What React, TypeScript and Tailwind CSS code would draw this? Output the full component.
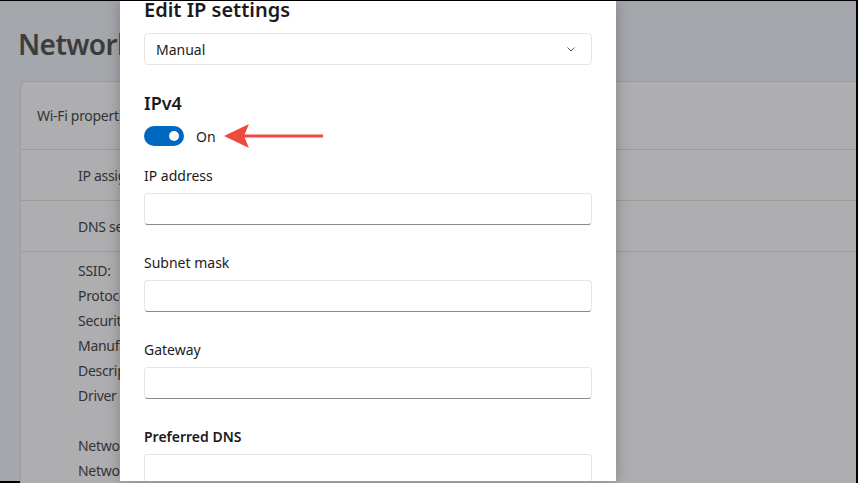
import React from 'react';

const font = { fontFamily: '"Segoe UI", "Noto Sans", "Open Sans", sans-serif' };

function TextBox() {
  return (
    <div className="shrink-0 h-[32px] w-[448px] rounded-[4px] border border-[#e5e5e5] border-b-[#8a8a8a] bg-white" />
  );
}

function Field({ label, bold }: { label: string; bold?: boolean }) {
  return (
    <div className="shrink-0 flex flex-col">
      <div className={`shrink-0 h-[20px] leading-[20px] text-[14px] text-[#1b1b1b] ${bold ? 'font-semibold' : ''}`}>
        {label}
      </div>
      <div className="shrink-0 mt-[7px]">
        <TextBox />
      </div>
    </div>
  );
}

export default function App() {
  const specs = ['SSID:', 'Protocol:', 'Security type:', 'Manufacturer:', 'Description:', 'Driver version:', '', 'Network band:', 'Network channel:'];

  return (
    <div
      className="relative w-[858px] h-[483px] overflow-hidden bg-black pt-[1px] pr-[2px] pb-[2px]"
      style={font}
    >
      {/* Background settings page (dimmed, hidden behind the dialog) */}
      <div className="flex flex-col w-full h-full bg-[#a4a7ab] text-[#333333] tracking-[-0.3px]">
        <div className="shrink-0 h-[80px] pl-[18px] pt-[24px]">
          <div className="w-[102px] overflow-hidden whitespace-nowrap text-[28px] leading-[38px] font-semibold text-[#3c3c3c] tracking-[-0.6px]">
            Network &amp; internet
          </div>
        </div>
        <div className="ml-[20px] flex-1 bg-[#aeaeb0] border-t border-l border-[#9c9c9c] rounded-tl-[6px] text-[14px]">
          <div className="h-[68px] flex items-center pl-[16px] border-b border-[#9c9c9c]">
            <span className="w-[83px] overflow-hidden whitespace-nowrap">Wi-Fi properties</span>
          </div>
          <div className="h-[51px] flex items-center pl-[57px] border-b border-[#9c9c9c]">
            <span className="w-[42px] overflow-hidden whitespace-nowrap">IP assignment:</span>
          </div>
          <div className="h-[51px] flex items-center pl-[57px] border-b border-[#9c9c9c]">
            <span className="w-[42px] overflow-hidden whitespace-nowrap">DNS server assignment:</span>
          </div>
          <div className="pl-[57px] pt-[6px] flex flex-col">
            {specs.map((s, i) => (
              <div key={i} className="shrink-0 w-[42px] overflow-hidden whitespace-nowrap h-[25px] leading-[25px]">{s}</div>
            ))}
          </div>
        </div>
      </div>

      {/* Dialog */}
      <div className="absolute left-[120px] top-[1px] bottom-[2px] w-[496px] bg-white shadow-[0_0_14px_rgba(0,0,0,0.25)] flex overflow-hidden">
        <div className="flex-1 pl-[24px] pr-[24px] flex flex-col">
          <div className="shrink-0 -mt-[5px] h-[28px] leading-[28px] text-[20px] font-semibold text-[#1b1b1b]">Edit IP settings</div>
          <div className="shrink-0 mt-[9px] h-[32px] w-[448px] rounded-[4px] border border-[#e5e5e5] flex items-center justify-between pl-[11px] pr-[14px] text-[14px] text-[#1b1b1b]">
            <span>Manual</span>
            <svg width="12" height="12" viewBox="0 0 12 12" fill="none">
              <path d="M2.5 4.5 L6 8 L9.5 4.5" stroke="#5a5a5a" strokeWidth="1" />
            </svg>
          </div>
          <div className="shrink-0 mt-[25px] h-[26px] leading-[26px] text-[18px] font-semibold text-[#1b1b1b]">IPv4</div>
          <div className="shrink-0 mt-[10px] flex items-center h-[20px]">
            <div className="w-[40px] h-[20px] rounded-full bg-[#0067c0] flex items-center justify-end pr-[5px]">
              <div className="w-[10px] h-[10px] rounded-full bg-white" />
            </div>
            <span className="ml-[12px] text-[14px] text-[#1b1b1b]">On</span>
            <svg className="ml-[7px]" width="102" height="26" viewBox="0 0 102 26">
              <polygon points="1,13 26,1 21,13 26,25" fill="#f04a3f" />
              <rect x="20" y="11.5" width="80" height="3" fill="#f04a3f" />
            </svg>
          </div>
          <div className="shrink-0 mt-[20px] flex flex-col gap-[28px]">
            <Field label="IP address" />
            <Field label="Subnet mask" />
            <Field label="Gateway" />
            <Field label="Preferred DNS" bold />
          </div>
        </div>
        <div className="w-[8px] flex justify-center pt-[46px]">
          <div className="w-[2px] h-[362px] rounded-full bg-[#8a8a8a]" />
        </div>
      </div>
    </div>
  );
}
